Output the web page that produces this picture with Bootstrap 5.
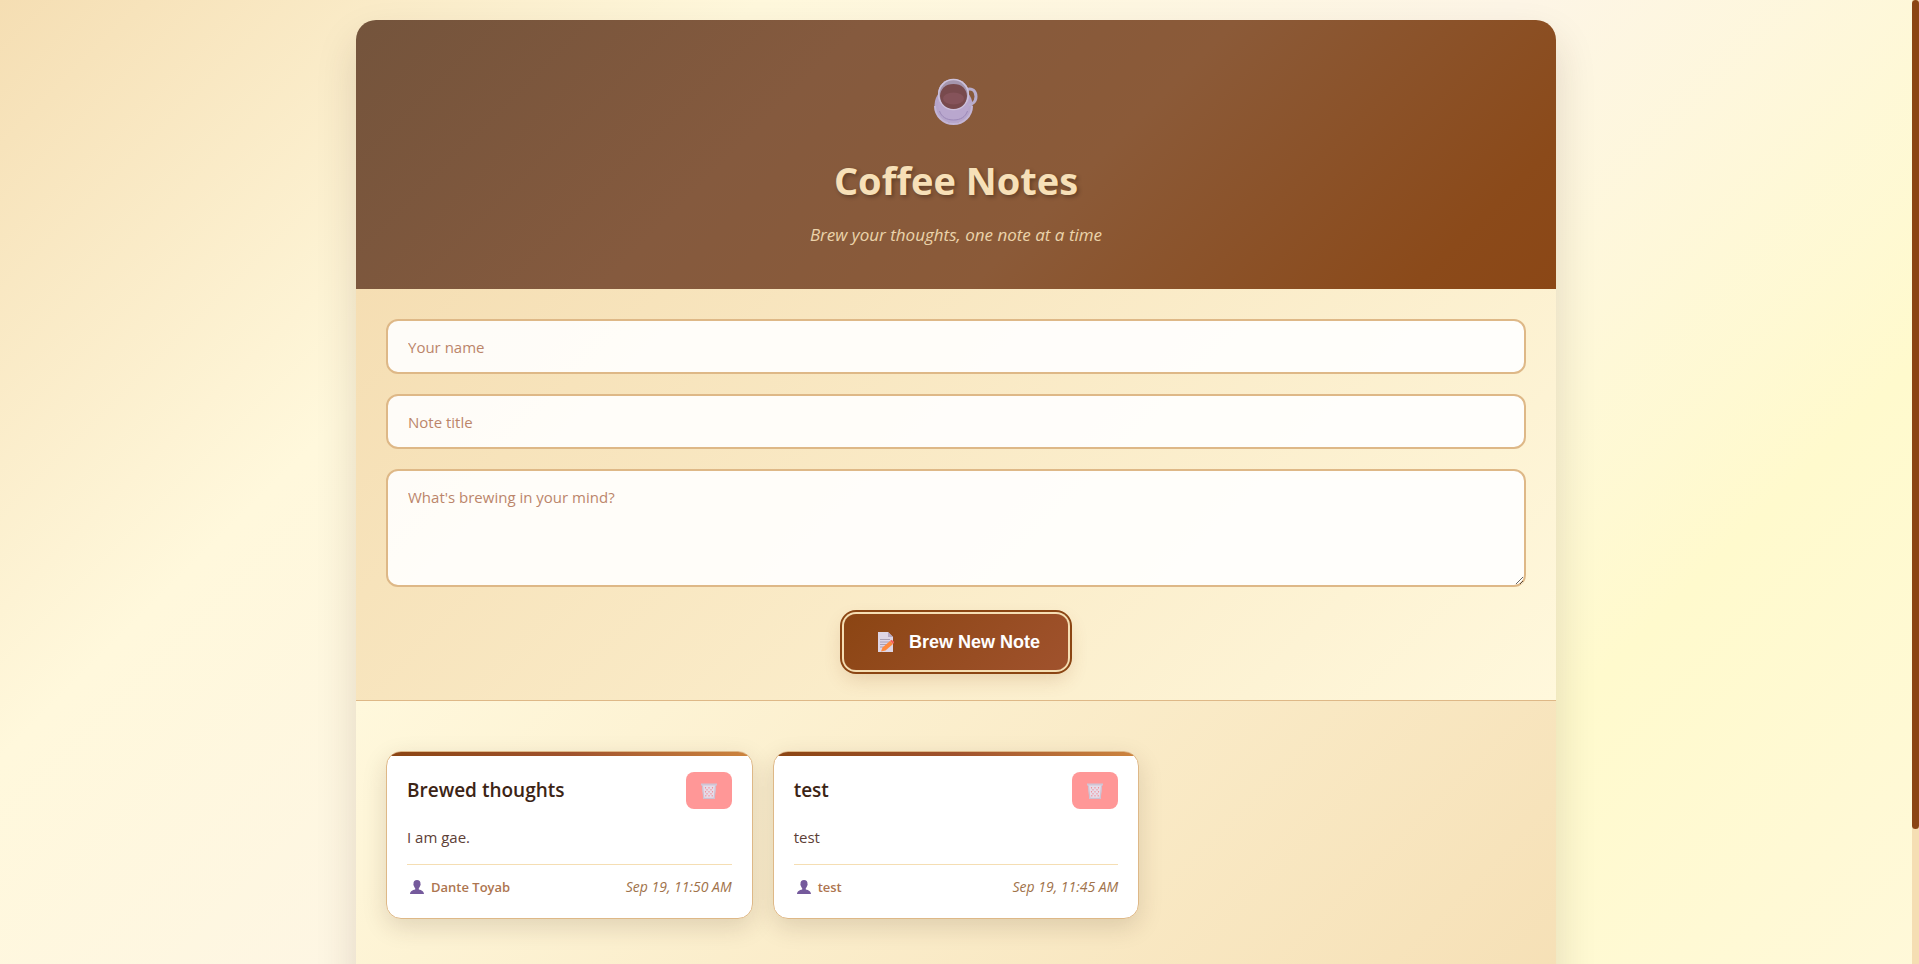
<!DOCTYPE html>
<html lang="en">
<head>
<meta charset="utf-8">
<meta name="viewport" content="width=device-width, initial-scale=1">
<title>Coffee Notes</title>
<link href="https://cdn.jsdelivr.net/npm/bootstrap@5.3.0/dist/css/bootstrap.min.css" rel="stylesheet">
<style>
  :root {
    --roast: #8b4513;
    --sienna: #a0522d;
    --wheat: #f5deb3;
    --cream: #fff8dc;
    --sand: #deb887;
  }
  body {
    font-family: "Segoe UI", "Open Sans", "Noto Sans", sans-serif;
    background: var(--wheat);
  }
  .page-scroll {
    overflow-y: auto;
    scrollbar-width: none;
  }
  .page-scroll::-webkit-scrollbar { display: none; }
  .scroll-rail { width: 7px; background: var(--wheat); }
  .scroll-thumb { height: 86%; background: var(--roast); border-radius: 4px; }
  .page-bg {
    padding: 20px;
    background: linear-gradient(135deg, #f5deb3 0%, #fff8dc 25%, #fdf5e6 50%, #fffacd 75%, #fff8dc 100%);
  }
  .notebook {
    max-width: 1200px;
    border-radius: 20px;
    box-shadow: 0 20px 40px rgba(60, 36, 21, .15);
  }
  .notebook-head {
    padding: 40px 30px;
    border-radius: 20px 20px 0 0;
    background: linear-gradient(135deg, #74543c 0%, #855a3e 35%, #8b5a38 60%, #8b4a1a 90%, #8b4716 100%);
    color: #f7e0b8;
  }
  .notebook-head h1 {
    margin-bottom: 10px;
    font-size: 38px;
    line-height: 62px;
    font-weight: 700;
    text-shadow: 2px 2px 4px rgba(0, 0, 0, .3);
  }
  .tagline { font-size: 17px; line-height: 28px; opacity: .9; }
  .cup { width: 48px; height: 48px; margin: 18px auto 23px; }
  .brew-form {
    gap: 20px;
    padding: 30px;
    border-bottom: 1px solid var(--sand);
    background: linear-gradient(135deg, #f5deb3, #fff8dc);
  }
  .brew-form .form-control {
    padding: 16px 20px 14px;
    border: 2px solid var(--sand);
    border-radius: 12px;
    background: rgba(255, 255, 255, .9);
    font-size: 15px;
    line-height: 21px;
  }
  .brew-form textarea.form-control { min-height: 118px; resize: vertical; }
  .brew-form .form-control::placeholder { color: var(--sienna); opacity: .7; }
  .brew-btn {
    gap: 15px;
    height: 56px;
    margin-top: 7px;
    padding: 0 28px 0 34px;
    border: 0;
    border-radius: 12px;
    background: linear-gradient(135deg, #8b4513, #a0522d);
    box-shadow: 0 0 0 2px var(--wheat), 0 0 0 4px var(--roast), 0 8px 20px rgba(139, 69, 19, .2);
    color: #fff;
    font: 700 18px "Liberation Sans", Arial, sans-serif;
    line-height: 20px;
  }
  .notes-area {
    padding: 50px 30px 186px;
    background: linear-gradient(135deg, #fff8dc, #f5deb3);
  }
  .note-grid {
    display: grid;
    grid-template-columns: repeat(auto-fill, minmax(320px, 1fr));
    gap: 20px;
  }
  .note {
    position: relative;
    overflow: hidden;
    padding: 20px;
    border: 1px solid var(--sand);
    border-radius: 15px;
    background: #fff;
  }
  .note-shell { border-radius: 15px; box-shadow: 0 8px 25px rgba(60, 36, 21, .15); }
  .note::before {
    content: "";
    position: absolute;
    inset: 0 0 auto;
    height: 4px;
    background: linear-gradient(90deg, #8b4513, #a0522d, #cd853f);
  }
  .note h2 { font-size: 19px; line-height: 36px; font-weight: 600; color: #3c2415; }
  .trash-btn { width: 46px; height: 37px; border: 0; border-radius: 8px; background: #ff9797; }
  .note-text { margin: 15px 0 14px; font-size: 15px; line-height: 26px; color: #5d4037; }
  .note-foot {
    padding-top: 11px;
    border-top: 1px solid var(--wheat);
    font-size: 14px;
    line-height: 22px;
    color: #a0724a;
  }
  .note-foot strong { gap: 7px; padding-left: 3px; font-weight: 600; font-size: 13px; color: #ad7550; }
</style>
</head>
<body>
<svg class="d-none" aria-hidden="true">
  <symbol id="i-trash" viewBox="0 0 16 16">
    <path d="M1 2h14l-1.500 14h-11z" fill="#e6dce8"/>
    <path d="M4.500 4v1.500M8 4v1.500M11.500 4v1.500M6 6v1.500M10 6v1.500M4.500 8v1.500M8 8v1.500M11.500 8v1.500M6 10v1.500M10 10v1.500M8 12v1.500M4.800 12v1.500M11.200 12v1.500" fill="none" stroke="#f0929c" stroke-width="1.100"/>
    <path d="M1.500 2.500L2.800 15.400h10.400L14.500 2.500" fill="none" stroke="#cbc1d2" stroke-width="1.200"/>
    <path d="M0 .5h16v2H0z" fill="#cfc5d5"/>
  </symbol>
  <symbol id="i-user" viewBox="0 0 14 14">
    <path d="M3.500 4C3.300 1.300 4.700 0 7 0s3.700 1.300 3.500 4c.4 1-.1 1.600-.4 1.800-.2 1.300-.8 2-1.300 2.500v1.200c2.800.7 5 1.500 5.200 4.500H0c.2-3 2.400-3.800 5.200-4.500V8.300c-.5-.5-1.100-1.200-1.300-2.500-.3-.2-.8-.8-.4-1.800z" fill="#755a9c"/>
  </symbol>
</svg>
<div class="d-flex vh-100">
<div class="page-scroll flex-grow-1">
  <div class="page-bg">
    <main class="notebook mx-auto">
      <header class="notebook-head text-center">
        <svg class="cup d-block" viewBox="0 0 48 48" aria-hidden="true">
          <ellipse cx="21.500" cy="27" rx="19" ry="18.500" fill="#b6a5cb"/>
          <path d="M3 28a18.500 18 0 0 0 37 0" fill="none" stroke="#c3b5d6" stroke-width="2"/>
          <path d="M35 11.500c5-2 9 1.500 9 7s-4.500 9-9 8.500" fill="none" stroke="#b8adcc" stroke-width="3"/>
          <path d="M6 16c0-9 7-15 15.500-15S37 7 37 16c0 10 0 14-2 18-2.500 5-7 8-13.500 8S10.500 39 8 34c-2-4-2-8-2-18z" fill="#b9a7ce"/>
          <path d="M7.500 33c2 6 7 9 14 9s12-3 14-9" fill="none" stroke="#9c88b8" stroke-width="1"/>
          <ellipse cx="21.500" cy="16.500" rx="14.800" ry="15" fill="#a596ae" stroke="#cdc2dc" stroke-width="1.500"/>
          <path d="M8 18C8.500 10.500 13.500 6 21.500 6s13 4.500 13.500 12c-.5 8-6 13-13.500 13S8.500 26 8 18z" fill="#784a4d"/>
          <ellipse cx="21.500" cy="20.500" rx="10.500" ry="6" fill="#85535a"/>
        </svg>
        <h1>Coffee Notes</h1>
        <p class="tagline fst-italic mb-0">Brew your thoughts, one note at a time</p>
      </header>
      <form class="brew-form d-flex flex-column">
        <input class="form-control" type="text" placeholder="Your name" aria-label="Your name">
        <input class="form-control" type="text" placeholder="Note title" aria-label="Note title">
        <textarea class="form-control" placeholder="What's brewing in your mind?" aria-label="Note content"></textarea>
        <button class="brew-btn d-flex align-items-center align-self-center" type="button">
          <svg width="16" height="20" viewBox="0 0 16 20" aria-hidden="true">
            <path d="M0 0h10l5 5v15H0z" fill="#ded5e5"/>
            <path d="M10 0v5h5z" fill="#b7a9c4"/>
            <path d="M2 7.500h10M2 10h10M2 12.500h8M2 15h4" stroke="#aaa0b5"/>
            <path d="M3 19.500l1.500-4L12 9l3 3-7.500 6.500z" fill="#ff8a3d"/>
            <path d="M12 9l1.500-1.300 3 2.500L15 12z" fill="#f4605a"/>
          </svg>
          <span>Brew New Note</span>
        </button>
      </form>
      <section class="notes-area">
        <div class="note-grid">
          <div class="note-shell">
            <article class="note">
              <div class="d-flex justify-content-between">
                <h2 class="mb-0">Brewed thoughts</h2>
                <button class="trash-btn d-flex align-items-center justify-content-center p-0" type="button" aria-label="Delete note"><svg width="16" height="16"><use href="#i-trash"/></svg></button>
              </div>
              <p class="note-text">I am gae.</p>
              <div class="note-foot d-flex justify-content-between">
                <strong class="d-flex align-items-center"><svg width="14" height="14"><use href="#i-user"/></svg>Dante Toyab</strong>
                <em>Sep 19, 11:50 AM</em>
              </div>
            </article>
          </div>
          <div class="note-shell">
            <article class="note">
              <div class="d-flex justify-content-between">
                <h2 class="mb-0">test</h2>
                <button class="trash-btn d-flex align-items-center justify-content-center p-0" type="button" aria-label="Delete note"><svg width="16" height="16"><use href="#i-trash"/></svg></button>
              </div>
              <p class="note-text">test</p>
              <div class="note-foot d-flex justify-content-between">
                <strong class="d-flex align-items-center"><svg width="14" height="14"><use href="#i-user"/></svg>test</strong>
                <em>Sep 19, 11:45 AM</em>
              </div>
            </article>
          </div>
        </div>
      </section>
    </main>
  </div>
</div>
<div class="scroll-rail flex-shrink-0" aria-hidden="true"><div class="scroll-thumb"></div></div>
</div>
<script src="https://cdn.jsdelivr.net/npm/bootstrap@5.3.0/dist/js/bootstrap.bundle.min.js"></script>
</body>
</html>
